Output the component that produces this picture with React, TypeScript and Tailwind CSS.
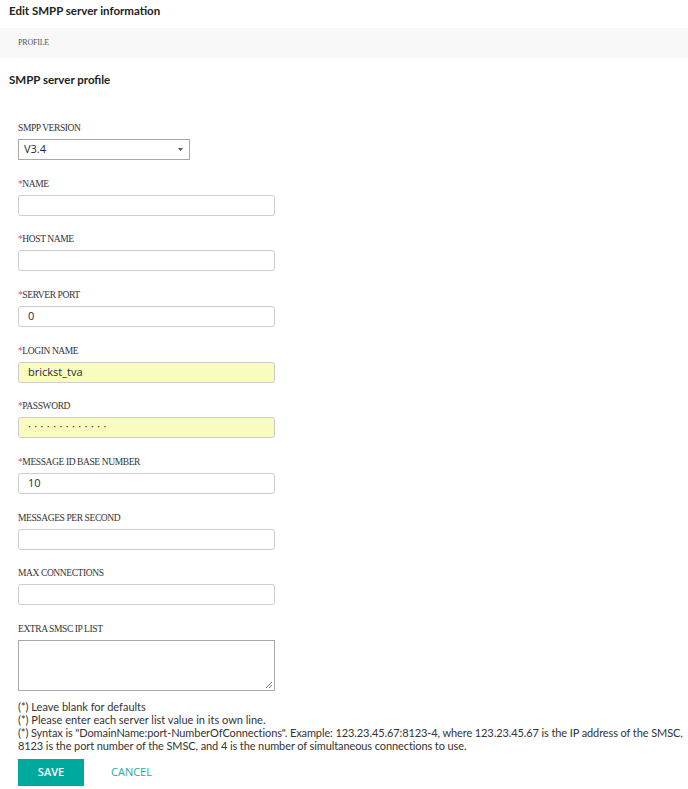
// App.tsx = Edit SMPP server form
const labelFont = { fontFamily: '"Liberation Serif", serif' };

interface FieldProps {
    label: string;
    required?: boolean;
    value?: string;
    filled?: boolean;
    password?: boolean;
}

const Label = ({ label, required }: { label: string; required?: boolean }) => (
    <div
        className="h-[12px] leading-[12px] mb-[5px] text-[9.5px] uppercase tracking-[-0.4px] text-[#333]"
        style={labelFont}
    >
        {required && <span className="text-[#e0487e]">*</span>}
        {label}
    </div>
);

const Field = ({ label, required, value, filled, password }: FieldProps) => (
    <div className="flex flex-col">
        <Label label={label} required={required} />
        <div
            className={`w-[257px] h-[21px] rounded-[3px] border border-[#cccccc] flex items-center px-[9px] text-[11px] text-[#1e2b3c] ${
                filled ? "bg-[#fafcbf]" : "bg-white"
            }`}
        >
            {password ? (
                <span className="tracking-[3.4px] text-[#5a2020] -mt-[4px]">·············</span>
            ) : (
                value
            )}
        </div>
    </div>
);

export default function App() {
    return (
        <div
            className="w-[688px] min-h-[789px] bg-white text-[#222]"
            style={{ fontFamily: '"Open Sans", "Noto Sans", sans-serif' }}
        >
            <h1
                className="h-[28px] pl-[9px] pt-[3px] text-[11.5px] font-bold leading-[16px] text-[#222]"
                style={{ fontFamily: 'Lato, sans-serif' }}
            >
                Edit SMPP server information
            </h1>
            <div className="h-[30px] bg-[#f8f8f8] flex items-center pl-[18px]">
                <span className="text-[8px] uppercase text-[#555] tracking-[-0.2px]" style={labelFont}>
                    Profile
                </span>
            </div>
            <h2
                className="pl-[9px] pt-[14px] text-[11.5px] font-bold leading-[16px] text-[#222]"
                style={{ fontFamily: 'Lato, sans-serif' }}
            >
                SMPP server profile
            </h2>

            <div className="pl-[18px] pt-[34px] flex flex-col gap-[17.67px]">
                <div className="flex flex-col">
                    <Label label="SMPP version" />
                    <div className="w-[172px] h-[21px] border border-[#a9a9a9] bg-white flex items-center justify-between pl-[5px] pr-[6px] text-[11px] text-[#1e2b3c]">
                        <span>V3.4</span>
                        <svg width="5" height="3" viewBox="0 0 5 3">
                            <path d="M0 0 L5 0 L2.5 3 Z" fill="#555" />
                        </svg>
                    </div>
                </div>
                <Field label="Name" required />
                <Field label="Host name" required />
                <Field label="Server port" required value="0" />
                <Field label="Login name" required value="brickst_tva" filled />
                <Field label="Password" required filled password />
                <Field label="Message ID base number" required value="10" />
                <Field label="Messages per second" />
                <Field label="Max connections" />
                <div className="flex flex-col">
                    <Label label="Extra SMSC IP list" />
                    <div className="relative w-[257px] h-[51px] border border-[#aaaaaa] bg-white">
                        <svg className="absolute right-[1px] bottom-[1px]" width="8" height="8" viewBox="0 0 8 8">
                            <path d="M7 1 L1 7 M7 4 L4 7" stroke="#777" strokeWidth="1" />
                        </svg>
                    </div>
                </div>
            </div>

            <div
                className="pl-[18px] pt-[9px] text-[11px] leading-[13px] text-[#333]"
                style={{ fontFamily: 'Lato, sans-serif' }}
            >
                <p>(*) Leave blank for defaults</p>
                <p>(*) Please enter each server list value in its own line.</p>
                <p className="tracking-[-0.1px] whitespace-nowrap">
                    (*) Syntax is "DomainName:port-NumberOfConnections". Example: 123.23.45.67:8123-4, where 123.23.45.67 is
                    the IP address of the SMSC,
                    <br />
                    8123 is the port number of the SMSC, and 4 is the number of simultaneous connections to use.
                </p>
            </div>

            <div className="pl-[18px] pt-[7px] flex items-center">
                <button className="w-[66px] h-[27px] bg-[#00a99d] text-white text-[11px] font-semibold">SAVE</button>
                <button className="ml-[27px] text-[#1fa89e] text-[11px]">CANCEL</button>
            </div>
        </div>
    );
}
